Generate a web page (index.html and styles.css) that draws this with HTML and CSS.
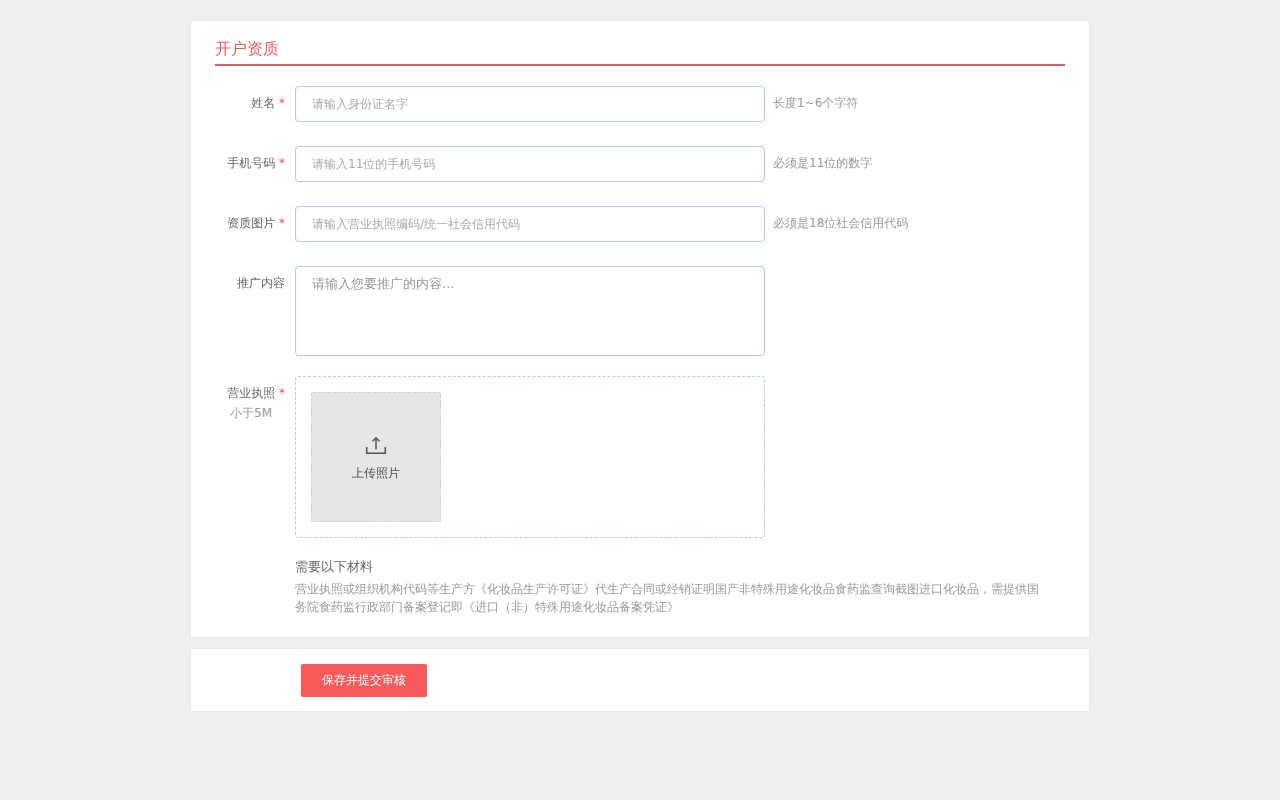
FILE: index.html
```html
<!DOCTYPE html>
<html lang="zh-CN">
<head>
<meta charset="utf-8">
<title>开户资质</title>
<link rel="stylesheet" href="styles.css">
</head>
<body>
<form class="page">
  <section class="card">
    <h1 class="title">开户资质</h1>
    <div class="row">
      <label class="label" for="name">姓名 <span class="required">*</span></label>
      <input class="field" id="name" type="text" placeholder="请输入身份证名字">
      <span class="hint">长度1~6个字符</span>
    </div>
    <div class="row">
      <label class="label" for="phone">手机号码 <span class="required">*</span></label>
      <input class="field" id="phone" type="text" placeholder="请输入11位的手机号码">
      <span class="hint">必须是11位的数字</span>
    </div>
    <div class="row">
      <label class="label" for="code">资质图片 <span class="required">*</span></label>
      <input class="field" id="code" type="text" placeholder="请输入营业执照编码/统一社会信用代码">
      <span class="hint">必须是18位社会信用代码</span>
    </div>
    <div class="row row-tall">
      <label class="label" for="content">推广内容</label>
      <textarea class="field field-area" id="content" placeholder="请输入您要推广的内容..."></textarea>
    </div>
    <div class="row row-tall">
      <label class="label" for="license">营业执照 <span class="required">*</span><span class="note">小于5M</span></label>
      <div class="upload">
        <label class="tile">
          <input class="file" id="license" type="file" accept="image/*">
          <svg class="icon" width="22" height="19" viewBox="0 0 22 19" fill="none" stroke="#5a595a" aria-hidden="true">
            <path d="M1.700 11V17.200H20.300V11" stroke-width="1.600"/>
            <path d="M11 13.500V2" stroke-width="1.600"/>
            <path d="M7.500 5.300L11 1.800L14.500 5.300" stroke-width="1.600"/>
          </svg>
          <span>上传照片</span>
        </label>
      </div>
    </div>
    <div class="materials">
      <h2 class="materials-title">需要以下材料</h2>
      <p class="materials-text">营业执照或组织机构代码等生产方《化妆品生产许可证》代生产合同或经销证明国产非特殊用途化妆品食药监查询截图进口化妆品，需提供国务院食药监行政部门备案登记即《进口（非）特殊用途化妆品备案凭证》</p>
    </div>
  </section>
  <section class="card actions">
    <button class="submit" type="submit">保存并提交审核</button>
  </section>
</form>
</body>
</html>
```
FILE: styles.css
```css
* {
  box-sizing: border-box;
}

body {
  margin: 0;
  padding: 20px;
  background: #eee;
  color: #666;
  font: 12px/20px "DejaVu Sans", "WenQuanYi Zen Hei", "Noto Sans CJK SC", sans-serif;
}

.page {
  display: flex;
  flex-direction: column;
  gap: 10px;
  max-width: 900px;
  margin: 0 auto;
}

.card {
  padding: 15px 24px 21px;
  border: 1px solid #e7eaec;
  border-radius: 2px;
  background: #fff;
}

.title {
  margin: 0 0 20px;
  padding-bottom: 2px;
  border-bottom: 2px solid #e65a5c;
  color: #ec5b5b;
  font-size: 16px;
  font-weight: 400;
  line-height: 26px;
}

.row {
  display: flex;
  align-items: flex-start;
  margin-bottom: 24px;
}

.row-tall {
  margin-bottom: 20px;
}

.label {
  flex: none;
  width: 70px;
  margin-right: 10px;
  padding-top: 7px;
  text-align: right;
}

.required {
  color: #f55a4e;
}

.note {
  display: block;
  padding-left: 2px;
  color: #999;
  text-align: center;
}

.field,
.upload {
  flex: 0 1 470px;
  min-width: 0;
  border: 1px solid #b5cae8;
  border-radius: 4px;
}

.field {
  height: 36px;
  padding: 0 16px;
  background: #fff;
  color: #666;
  font: inherit;
}

.field::placeholder {
  color: #aaa;
}

.field-area {
  height: 90px;
  padding: 7px 16px;
  font-size: 13px;
  resize: none;
}

.field-area::placeholder {
  color: #999;
}

.hint {
  padding: 7px 0 0 8px;
  color: #999;
}

.upload {
  padding: 15px;
  border: 1px dashed #b3cde0;
  border-radius: 3px;
}

.tile {
  display: flex;
  flex-direction: column;
  align-items: center;
  justify-content: center;
  gap: 8px;
  width: 130px;
  height: 130px;
  padding-top: 4px;
  border: 1px dashed #d2d2d2;
  border-radius: 2px;
  background: #e7e5e6;
  color: #4d4d4d;
  cursor: pointer;
}

.file {
  position: absolute;
  width: 1px;
  height: 1px;
  opacity: 0;
}

.icon {
  display: block;
}

.materials {
  padding: 0 20px 0 80px;
}

.materials-title {
  margin: 0 0 4px;
  font-size: 13px;
  font-weight: 400;
  line-height: 18px;
}

.materials-text {
  margin: 0;
  color: #999;
  line-height: 18px;
}

.actions {
  padding: 15px 110px 14px;
}

.submit {
  display: block;
  height: 33px;
  padding: 0 21px 2px;
  border: 0;
  border-radius: 2px;
  background: #f65a5b;
  color: #fff;
  font: inherit;
  cursor: pointer;
}
```
